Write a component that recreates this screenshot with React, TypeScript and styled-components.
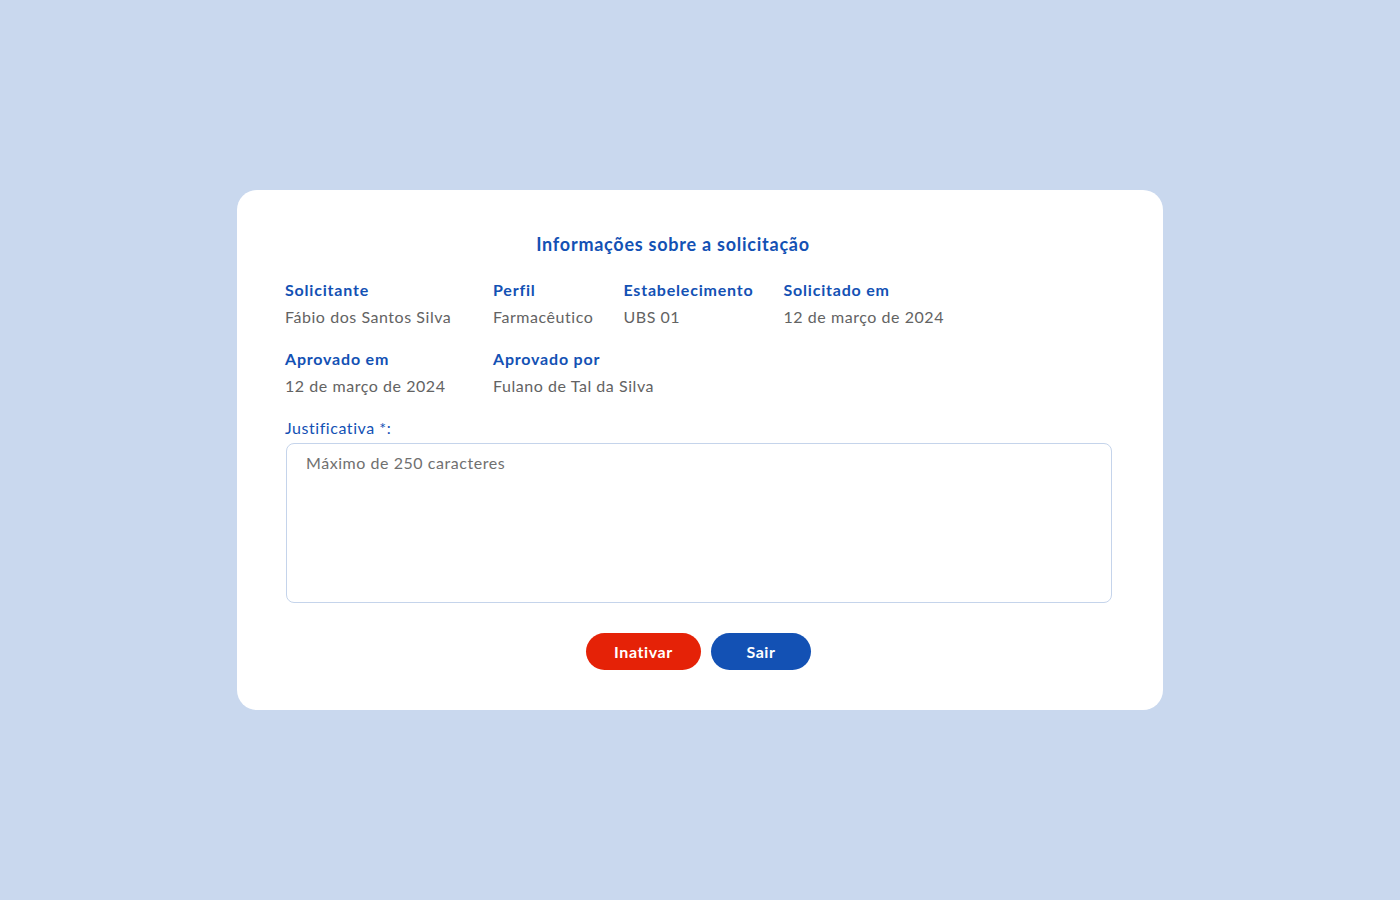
import React from "react";
import styled, { createGlobalStyle } from "styled-components";

const GlobalStyle = createGlobalStyle`
  html, body { margin: 0; padding: 0; }
  body {
    background: #c9d8ee;
    font-family: Lato, "Open Sans", "Liberation Sans", sans-serif;
  }
  #root { min-height: 100vh; }
`;

const Page = styled.div`
  min-height: 100vh;
  display: flex;
  align-items: center;
  justify-content: center;
`;

const Card = styled.section`
  width: 926px;
  box-sizing: border-box;
  background: #ffffff;
  border-radius: 20px;
  padding: 40px 48px;
  display: flex;
  flex-direction: column;
`;

const Title = styled.h2`
  margin: 0 0 21px;
  padding-right: 54px;
  text-align: center;
  font-size: 18px;
  line-height: 28px;
  font-weight: 700;
  letter-spacing: 0.75px;
  color: #1351b4;
`;

const InfoRow = styled.div`
  display: flex;
  gap: 30px;
  margin-bottom: 19px;
`;

const Field = styled.div<{ $width?: number }>`
  display: flex;
  flex-direction: column;
  gap: 4px;
  ${(p) => (p.$width ? `width: ${p.$width}px; flex: none;` : "")}
`;

const Label = styled.span`
  font-size: 16px;
  line-height: 22px;
  font-weight: 700;
  letter-spacing: 0.8px;
  color: #1351b4;
`;

const Value = styled.span`
  font-size: 16px;
  line-height: 24px;
  letter-spacing: 0.55px;
  color: #636363;
`;

const FieldLabel = styled.label`
  font-size: 16px;
  line-height: 22px;
  letter-spacing: 0.55px;
  color: #1351b4;
  margin-bottom: 4px;
`;

const TextArea = styled.textarea`
  box-sizing: border-box;
  width: 826px;
  margin-left: 1px;
  height: 160px;
  resize: none;
  border: 1px solid #c5d4eb;
  border-radius: 8px;
  padding: 8px 19px;
  font-family: inherit;
  font-size: 16px;
  line-height: 22px;
  letter-spacing: 0.55px;
  color: #333;
  outline: none;
  &::placeholder { color: #707070; }
`;

const Actions = styled.div`
  display: flex;
  justify-content: center;
  gap: 10px;
  margin-top: 30px;
  padding-right: 3px;
`;

const Button = styled.button<{ $variant: "danger" | "primary"; $width: number }>`
  width: ${(p) => p.$width}px;
  height: 37px;
  border: none;
  border-radius: 19px;
  background: ${(p) => (p.$variant === "danger" ? "#e52207" : "#1351b4")};
  color: #ffffff;
  font-family: inherit;
  font-size: 16px;
  font-weight: 700;
  letter-spacing: 0.6px;
  cursor: pointer;
`;

export default function App() {
  return (
    <>
      <GlobalStyle />
      <Page>
        <Card>
          <Title>Informações sobre a solicitação</Title>
          <InfoRow>
            <Field $width={178}>
              <Label>Solicitante</Label>
              <Value>Fábio dos Santos Silva</Value>
            </Field>
            <Field>
              <Label>Perfil</Label>
              <Value>Farmacêutico</Value>
            </Field>
            <Field>
              <Label>Estabelecimento</Label>
              <Value>UBS 01</Value>
            </Field>
            <Field>
              <Label>Solicitado em</Label>
              <Value>12 de março de 2024</Value>
            </Field>
          </InfoRow>
          <InfoRow>
            <Field $width={178}>
              <Label>Aprovado em</Label>
              <Value>12 de março de 2024</Value>
            </Field>
            <Field>
              <Label>Aprovado por</Label>
              <Value>Fulano de Tal da Silva</Value>
            </Field>
          </InfoRow>
          <FieldLabel htmlFor="just">Justificativa *:</FieldLabel>
          <TextArea id="just" placeholder="Máximo de 250 caracteres" />
          <Actions>
            <Button $variant="danger" $width={115}>Inativar</Button>
            <Button $variant="primary" $width={100}>Sair</Button>
          </Actions>
        </Card>
      </Page>
    </>
  );
}
